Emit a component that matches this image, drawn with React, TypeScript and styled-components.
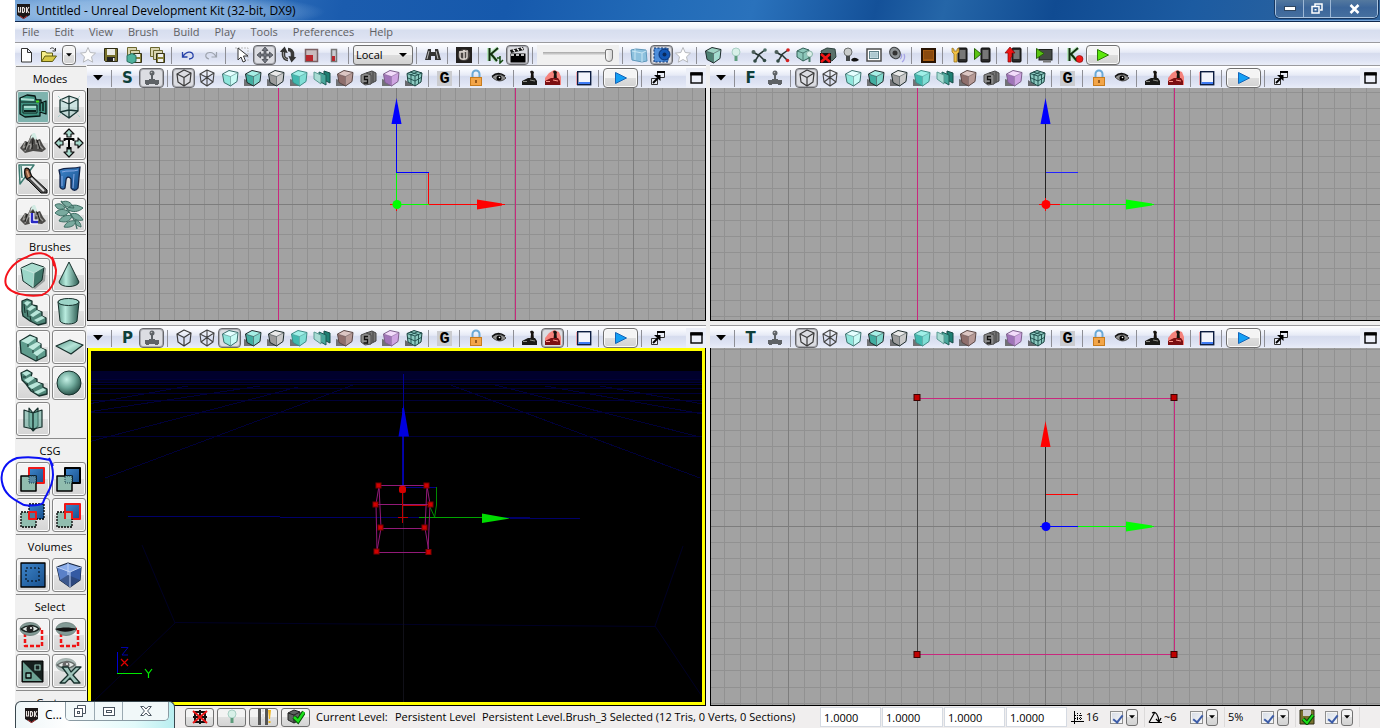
import React from "react";
import styled, { createGlobalStyle, css } from "styled-components";

const GlobalStyle = createGlobalStyle`
  * { box-sizing: border-box; }
  body { margin: 0; background: #fff; overflow: hidden; }
  button, input, select { font: inherit; color: inherit; margin: 0; padding: 0; }
  svg { display: block; }
`;

const barFill = "linear-gradient(#ffffff 0%, #f4f6fc 22%, #e6eaf6 42%, #d6dcee 48%, #dfe4f4 80%, #e9edf8 100%)";

const AppWindow = styled.div`
  position: relative;
  display: flex;
  flex-direction: column;
  height: 100vh;
  padding-left: 15px;
  font-family: "Open Sans", "Noto Sans", sans-serif;
  font-size: 12px;
  line-height: 16px;
  color: #000;
`;

const TitleBar = styled.header`
  display: flex;
  justify-content: space-between;
  flex: none;
  height: 22px;
  border-bottom: 1px solid #10284d;
  box-shadow: inset 0 -1px 0 #7ba8db;
  background:
    radial-gradient(ellipse 180px 20px at 130px 12px, rgba(190, 216, 242, 0.75) 0%, rgba(170, 204, 238, 0.6) 60%, transparent 100%),
    linear-gradient(105deg, #6b9cd2 0%, #3f7ec5 12%, #1b5cae 24%, #1659ac 36%, #236cb8 48%, #2a72bc 54%, #145199 63%, #2566a8 68%, #104b92 76%, #1c5ba1 86%, #31669f 100%);
`;
const TitleText = styled.div`
  display: flex;
  align-items: center;
  gap: 5px;
  padding: 1px 0 0 1px;
  white-space: nowrap;
`;
const TitleLabel = styled.h1`
  margin: 0;
  font-size: 12px;
  line-height: 20px;
  font-weight: 400;
`;
const WindowButtons = styled.div`
  display: flex;
  align-self: flex-start;
  height: 18px;
  margin-right: 2px;
  border: 1px solid #a9c3df;
  border-top: 0;
  border-radius: 0 0 5px 5px;
  box-shadow: 0 0 0 1px #17365f;
  overflow: hidden;
`;
const WindowButton = styled.button<{ $wide?: boolean }>`
  display: flex;
  align-items: center;
  justify-content: center;
  width: ${(p) => (p.$wide ? 47 : 27)}px;
  border: 0;
  border-left: 1px solid #9db8d6;
  background: linear-gradient(#54799f, #3c669a 45%, #456f9f);
  &:first-child { border-left: 0; }
`;

const MenuBar = styled.nav`
  display: flex;
  align-items: center;
  flex: none;
  height: 20px;
  background: linear-gradient(#ffffff 0%, #f1f4fb 30%, #d7deef 42%, #dde2f2 80%, #e6eaf6 100%);
`;
const MenuItem = styled.button`
  border: 0;
  padding: 0 8px 0 7px;
  background: none;
  font-size: 11px;
  color: #606063;
`;

const Bar = styled.div`
  display: flex;
  align-items: center;
  flex: none;
  height: 23px;
  padding-top: 2px;
  border-top: 1px solid #9a9a9e;
  background: ${barFill};
`;
const Separator = styled.i`
  flex: none;
  width: 8px;
  height: 17px;
  background: linear-gradient(#8e8f96, #8e8f96) 3px 0 / 1px 100% no-repeat;
`;
const ToolButton = styled.button<{ $pressed?: boolean; $w?: number; $raised?: boolean }>`
  display: flex;
  align-items: center;
  justify-content: center;
  flex: none;
  width: ${(p) => p.$w ?? 23}px;
  height: 20px;
  border: 1px solid transparent;
  border-radius: 4px;
  background: none;
  ${(p) => p.$pressed && css`
    border-color: #66676b;
    background: #dcdde2;
    box-shadow: inset 0 0 0 1px #a9aab0;
  `}
  ${(p) => p.$raised && css`
    border-color: #707070;
    background: linear-gradient(#f4f4f4 50%, #dedede 50%, #d2d2d2);
    box-shadow: inset 0 0 0 1px #fafafa;
  `}
`;
const Spacer = styled.span`
  flex: 1;
`;
const MaximizeSlot = styled.span`
  display: flex;
  justify-content: flex-end;
  width: 20px;
  background: #eceff8;
`;
const LetterGlyph = styled.b<{ $boxed?: boolean }>`
  font-family: ${(p) => (p.$boxed ? '"Liberation Mono", monospace' : '"DejaVu Sans", sans-serif')};
  font-size: ${(p) => (p.$boxed ? 17 : 15)}px;
  line-height: 15px;
  width: 15px;
  text-align: center;
  color: ${(p) => (p.$boxed ? "#000" : "#0e3f3a")};
  background: ${(p) => (p.$boxed ? "#cbccd0" : "none")};
`;

const SelectBox = styled.span`
  position: relative;
  flex: none;
  width: 60px;
  height: 20px;
  &::after {
    content: "";
    position: absolute;
    right: 6px;
    top: 8px;
    border: 4px solid transparent;
    border-top-color: #000;
    border-bottom: 0;
    pointer-events: none;
  }
`;
const Select = styled.select`
  appearance: none;
  width: 100%;
  height: 100%;
  padding-left: 2px;
  border: 1px solid #707070;
  border-radius: 3px;
  background: linear-gradient(#f3f3f3 50%, #dedede 50%, #d2d2d2);
  font-size: 11px;
`;
const SliderBox = styled.span`
  display: flex;
  align-items: center;
  width: 82px;
  height: 20px;
  padding: 0 6px;
  background: #f0f0f0;
`;
const Slider = styled.input`
  appearance: none;
  width: 100%;
  height: 14px;
  background: linear-gradient(#a5a5a5, #e4e4e4) 0 4px / 100% 3px no-repeat;
  &::-webkit-slider-thumb {
    appearance: none;
    width: 8px;
    height: 13px;
    border: 1px solid #777;
    border-radius: 2px 2px 4px 4px;
    background: linear-gradient(90deg, #fafafa, #d5d5d5);
  }
`;

const Main = styled.main`
  display: flex;
  flex: 1;
  min-height: 0;
`;
const SidePanel = styled.aside`
  flex: none;
  width: 72px;
  padding-top: 1px;
  overflow: hidden;
  background: #f0f0f0;
`;
const PanelSection = styled.section`
  padding: 0 1px;
`;
const SectionTitle = styled.h2`
  margin: 0;
  height: 24px;
  padding-right: 2px;
  border-top: 1px solid #8b8b8b;
  text-align: center;
  font-size: 11px;
  font-weight: 400;
  line-height: 23px;
`;
const ModeGrid = styled.div`
  display: grid;
  grid-template-columns: 34px 34px;
  gap: 2px;
  padding-bottom: 2px;
`;
const ModeButton = styled.button<{ $on?: boolean }>`
  display: flex;
  align-items: center;
  justify-content: center;
  height: 34px;
  border: 1px solid #858585;
  border-radius: 3px;
  background: ${(p) => (p.$on ? "#7fb3ae" : "linear-gradient(#f3f3f3 50%, #e2e2e2 50%, #d5d5d5)")};
  box-shadow: inset 0 0 0 1px ${(p) => (p.$on ? "#dfe8e8" : "#fbfbfb")};
`;

const ViewportGrid = styled.div`
  display: grid;
  flex: 1;
  min-width: 0;
  grid-template-columns: minmax(0, 619fr) minmax(0, 670fr);
  grid-template-rows: minmax(0, 256fr) minmax(0, 381fr);
  gap: 4px;
  background: #efefef;
`;
const ViewportBox = styled.section`
  display: flex;
  flex-direction: column;
  min-width: 0;
  min-height: 0;
  overflow: hidden;
`;
const Canvas = styled.div<{ $edge: boolean }>`
  flex: 1;
  min-height: 0;
  border: solid #000;
  border-width: 0 ${(p) => (p.$edge ? 0 : 1)}px 1px 1px;
  background: #a2a2a2;
  svg { width: 100%; height: 100%; }
`;

const StatusBar = styled.footer`
  display: flex;
  align-items: center;
  flex: none;
  height: 22px;
  padding-left: 170px;
  background: #f0eeee;
  font-size: 11px;
  white-space: nowrap;
`;
const StatusButton = styled.button`
  display: flex;
  align-items: center;
  justify-content: center;
  flex: none;
  width: 29px;
  height: 19px;
  margin-right: 3px;
  border: 1px solid #707070;
  border-radius: 3px;
  background: linear-gradient(#f3f3f3 50%, #e0e0e0 50%, #d4d4d4);
`;
const StatusText = styled.span<{ $w?: number }>`
  flex: none;
  width: ${(p) => (p.$w ? `${p.$w}px` : "auto")};
  padding-left: 3px;
`;
const ScaleInput = styled.input`
  flex: none;
  width: 61px;
  height: 20px;
  margin-right: 1px;
  padding-left: 3px;
  border: 1px solid #d5dae2;
  background: #fff;
`;
const SnapGroup = styled.div<{ $w: number }>`
  display: flex;
  align-items: center;
  flex: none;
  width: ${(p) => p.$w}px;
  height: 20px;
  padding: 0 6px 0 3px;
  border-right: 1px solid #dcdada;
`;
const SnapLabel = styled.label`
  display: flex;
  align-items: center;
  flex: 1;
  gap: 2px;
`;
const Check = styled.input`
  appearance: none;
  position: relative;
  width: 13px;
  height: 13px;
  margin-left: auto;
  border: 1px solid #8e8f8f;
  background: linear-gradient(135deg, #d5dbe4, #f6f8fb);
  box-shadow: inset 0 0 0 1px #f4f4f4;
  &:checked::after {
    content: "";
    position: absolute;
    left: 4px;
    top: 1px;
    width: 4px;
    height: 8px;
    border: solid #3c5ca8;
    border-width: 0 2px 2px 0;
    transform: rotate(38deg);
  }
`;
const DropButton = styled.button`
  display: flex;
  align-items: center;
  justify-content: center;
  width: 12px;
  height: 17px;
  margin-left: 3px;
  border: 1px solid #707070;
  border-radius: 3px;
  background: linear-gradient(#f3f3f3 50%, #dedede 50%, #d2d2d2);
`;

const MiniWindow = styled.div`
  position: absolute;
  left: 15px;
  bottom: 0;
  display: flex;
  justify-content: space-between;
  width: 160px;
  height: 27px;
  padding: 0 5px 0 6px;
  border: 1px solid #39474e;
  border-bottom: 0;
  border-radius: 6px 6px 0 0;
  background: linear-gradient(90deg, #eef6f8, #ffffff 35%, #e2fafa 75%, #b9eef0);
`;
const MiniTitle = styled.div`
  display: flex;
  align-items: center;
  gap: 6px;
  padding-left: 2px;
`;
const MiniButtons = styled.div`
  display: flex;
  height: 19px;
  border: 1px solid #8a9aa3;
  border-top: 0;
  border-radius: 0 0 5px 5px;
  overflow: hidden;
`;
const MiniButton = styled.button<{ $wide?: boolean }>`
  display: flex;
  align-items: center;
  justify-content: center;
  width: ${(p) => (p.$wide ? 46 : 28)}px;
  border: 0;
  border-left: 1px solid #9aa9b1;
  background: #f1f8f9;
  &:first-child { border-left: 0; }
`;

const Scribble = styled.svg<{ $top: number }>`
  position: absolute;
  left: 0;
  top: ${(p) => p.$top}px;
  pointer-events: none;
`;
const SharedDefs = styled.svg`
  position: absolute;
`;

/* ---------- small toolbar icons, drawn on a 18 x 18 field ---------- */

const Icon = ({ children, s = 18 }: { children: React.ReactNode; s?: number }) => (
  <svg width={s} height={s} viewBox={`0 0 ${s} ${s}`} fill="none" aria-hidden="true">{children}</svg>
);

const DownArrow = ({ s = 10 }: { s?: number }) => (
  <svg width={s} height="6" viewBox="0 0 10 6" aria-hidden="true"><path d="M0 0h10L5 5.5z" fill="#000" /></svg>
);

const UdkLogo = () => (
  <Icon s={15}>
    <path d="M1 0h13v11l-6.500 4L1 11z" fill="#1b1717" />
    <path d="M2.500 3v5h2V3M6.500 3.500v5h1l1-1v-3l-1-1zM10.500 3v6M13 3l-2 3 2 3" stroke="#e8e3e0" strokeWidth="1.100" />
    <path d="M4 12l3.500 2.500L11 12" stroke="#b33" />
  </Icon>
);

const Cube = ({ top, left, right, line = "#1e2b2b", shadow = true }: { top: string; left: string; right: string; line?: string; shadow?: boolean }) => (
  <Icon>
    {shadow && <path d="M0 10v7h10l-4-5z" fill="#555" opacity=".8" />}
    <path d="M1.500 5L8 1.500 17 3.500 9.500 7.500z" fill={top} />
    <path d="M1.500 5L9.500 7.500v9.500L3 13.500z" fill={left} />
    <path d="M9.500 7.500L17 3.500 16 12.500 9.500 17z" fill={right} />
    <path d="M1.500 5L8 1.500 17 3.500l-1 9L9.500 17 3 13.500z" stroke={line} strokeLinejoin="round" strokeWidth="1" />
    <path d="M1.500 5L9.500 7.500V17M9.500 7.500L17 3.500" stroke={line} strokeWidth=".8" opacity=".6" />
  </Icon>
);
const WireCube = () => (
  <Icon>
    <path d="M2 5l7-4 7 3-1 9-6 4-6-4zM2 5l7 3.500 7-4.500M9 8.500v8.500" stroke="#3a3a3a" strokeWidth="1.200" strokeLinejoin="round" />
  </Icon>
);
const WireCubeOpen = () => (
  <Icon>
    <path d="M2 5l7-4 7 3-1 9-6 4-6-4zM2 5l7 3.500 7-4.500M9 8.500v8.500M9 1v7.500L3 13M9 8.500l6 4.500" stroke="#444" strokeWidth="1.100" strokeLinejoin="round" />
  </Icon>
);
const Layers = () => (
  <Icon>
    <path d="M11 2l6 2v10l-6-3z" fill="#1f7f73" stroke="#174b46" />
    <path d="M6 3l7 3v10l-7-4z" fill="#49a79c" stroke="#1c5a54" />
    <path d="M1 3l7 3v9l-7-5z" fill="#a9dcd4" stroke="#5b9b93" />
  </Icon>
);
const SLayers = () => (
  <Icon>
    <path d="M7 4l6-2 4 2v8l-6 3z" fill="#777" stroke="#444" />
    <path d="M11 4v10M14 3v10" stroke="#444" />
    <path d="M2 6l5-2 5 2v9l-6 1-4-3z" fill="#8a8a8a" stroke="#4c4c4c" />
    <path d="M9 7.500H5.500v3h3V14H4.500" stroke="#111" strokeWidth="1.300" />
  </Icon>
);
const GridCube = () => (
  <Icon>
    <path d="M0 11v6h9z" fill="#333" opacity=".7" />
    <path d="M2 4.500L9 1.500l8 2.500-1 9-6 4-7-4z" fill="#8ccac1" stroke="#173f3c" />
    <path d="M2 4.500L10 7l7-3M10 7v10M5 3l8 2.500M13 2.500L5.500 6M3 9l7 3 7-4M6 6v9M13.500 5.500v9" stroke="#1c4b48" strokeWidth=".9" />
  </Icon>
);
const Joystick = ({ kind = "grey" }: { kind?: "grey" | "black" | "red" }) => (
  <Icon>
    {kind === "grey" ? (
      <>
        <circle cx="9" cy="4" r="2.500" fill="#5e6266" />
        <path d="M8 6h2v5H8zM6 10h6v1H6zM2 11h14v4H2zM3 15h3v1H3zM12 15h3v1h-3z" fill="#5e6266" />
        <circle cx="8.500" cy="3.500" r=".8" fill="#bbb" />
      </>
    ) : (
      <>
        {kind === "red" && <path d="M1 16V9l4-5 5-3 5 2 2 5v8z" fill="#f5827c" />}
        <path d="M9 2.500l2-1 2 1.500-.5 2 .5 5h-3.500l.5-5z" fill="#17130f" />
        <path d="M1 12l6-3h7l2 3v4H1z" fill={kind === "red" ? "#7c0f12" : "#1a1a18"} />
        <path d="M2 12.500h4M9 11l5 1" stroke={kind === "red" ? "#ff9b90" : "#8a8a84"} />
      </>
    )}
  </Icon>
);
const Lock = () => (
  <Icon>
    <path d="M5.500 9V5a3.500 3.500 0 017 0v4" stroke="#6aa9d6" strokeWidth="2" />
    <rect x="3.500" y="8.500" width="11" height="8" fill="#f3a548" stroke="#c67c1f" />
    <path d="M9 11v3" stroke="#7c430b" strokeWidth="1.500" />
  </Icon>
);
const Eye = () => (
  <Icon>
    <path d="M2 8c4-4 10-3 14 1-4 4-9 4-14-1z" fill="#8f8f8f" stroke="#444" />
    <path d="M2 7.500c4-4 9-3.500 13-.5" stroke="#111" strokeWidth="1.500" />
    <circle cx="9" cy="9" r="2.500" fill="#000" /><circle cx="9.500" cy="8.500" r=".8" fill="#fff" />
  </Icon>
);
const Frame = () => (
  <Icon>
    <path d="M2 3v13" stroke="#f66" />
    <rect x="2.700" y="2.700" width="13" height="13" fill="#f2f4fb" stroke="#0b1c40" strokeWidth="1.400" />
    <path d="M3.500 13h11.500v2H3.500z" fill="#3f7cf5" />
  </Icon>
);
const PlayGlyph = ({ green }: { green?: boolean }) => (
  <Icon s={14}><path d="M1.500 1.500L12.500 7l-11 5.500z" fill={green ? "#5be80a" : "#14a0f5"} stroke={green ? "#2b7a06" : "#1565b8"} /></Icon>
);
const PopOut = () => (
  <Icon>
    <path d="M8.500 2.500h7v6h-7zM2.500 9.500h6v6h-6z" fill="#e9edf7" stroke="#333" />
    <path d="M8 3h8" stroke="#000" strokeWidth="2" />
    <path d="M4 14l5-5" stroke="#000" strokeWidth="2" /><path d="M5 6h6.500v6z" fill="#000" />
  </Icon>
);
const Maximize = () => (
  <svg width="18" height="12" viewBox="0 0 18 12" fill="none" aria-hidden="true">
    <rect x="4" y="1" width="11" height="10" stroke="#000" strokeWidth="1.400" /><path d="M3.300 2h12.400" stroke="#000" strokeWidth="3" />
  </svg>
);
const NewFile = () => <Icon><path d="M4.500 2.500h6l4 4v9.500h-10zM10.500 2.500v4h4" fill="#fff" stroke="#333" strokeLinejoin="round" /></Icon>;
const OpenFile = () => (
  <Icon>
    <path d="M1.500 15.500v-10h4l1 1.500h6v3" fill="#f6ef8a" stroke="#5d5a14" />
    <path d="M1.500 15.500l3.500-5.500h11.500l-4 5.500z" fill="#d6c844" stroke="#5d5a14" />
    <path d="M10 3c2-2 4-1 5 1M15.500 2v3h-3" stroke="#333" />
  </Icon>
);
const Star = ({ soft }: { soft?: boolean }) => (
  <Icon><path d="M9 1.500l2.200 5 5.300.6-4 3.700 1.200 5.400L9 13.500l-4.700 2.700 1.200-5.400-4-3.700 5.300-.6z" fill={soft ? "#fff" : "#fdfdfd"} stroke="#b7b9bd" /></Icon>
);
const Disk = () => (
  <Icon>
    <path d="M2.500 2.500h13v13h-12l-1-1z" fill="#77702c" stroke="#2e2c16" />
    <path d="M5 3h8v6H5z" fill="#e9e9e4" /><path d="M5 11h8v4H5z" fill="#222" /><path d="M11 12h1.500v3H11z" fill="#eee" />
  </Icon>
);
const Disks = ({ cube }: { cube?: boolean }) => (
  <Icon>
    <path d="M2.500 1.500h9v9h-9z" fill="#d9d5b0" stroke="#6b672e" />
    <path d="M5.500 4.500h9v9h-9z" fill="#d9d5b0" stroke="#6b672e" />
    <path d="M8.500 7.500h8v9h-8z" fill="#8b843c" stroke="#35331a" />
    <path d="M10 8h5v3h-5zM10 13h5v3h-5z" fill="#eee" />
    {cube && <path d="M2 9.500l5-2 4 2v6l-4 2-5-2z" fill="#4fb29d" stroke="#2b6e60" />}
  </Icon>
);
const Undo = ({ flip }: { flip?: boolean }) => (
  <Icon>
    {flip
      ? <path d="M14.500 6v5h-5M14 10.500C11 5 5 6 4 8.500s1 4 3 4.500" stroke="#9da3ad" strokeWidth="1.200" />
      : <path d="M3.500 6v5h5M4 10.500C7 5 13 5 14 8.500s-2 4.500-4 4.500" stroke="#2742a8" strokeWidth="1.300" />}
  </Icon>
);
const Pointer = () => <Icon><path d="M2 2h13v13" stroke="#bbb" strokeDasharray="2 1" /><path d="M5 2v12l3-3 2 5 2.500-1-2-5H15z" fill="#fff" stroke="#333" strokeLinejoin="round" /></Icon>;
const Move = () => <Icon><path d="M9 1l3 3.500h-2V8h3.500V6L17 9l-3.500 3v-2H10v3.500h2L9 17l-3-3.500h2V10H4.500v2L1 9l3.500-3v2H8V4.500H6z" fill="#73777f" stroke="#3b3e45" strokeWidth=".7" /></Icon>;
const Rotate = () => (
  <Icon>
    <path d="M4.500 6v3a4.500 4.500 0 004.500 4.500M13.500 11V8A4.500 4.500 0 009 3.500" stroke="#3a3a3a" strokeWidth="3.500" />
    <path d="M4.500 1l4 6H.5zM13.500 16l-4-6h8z" fill="#333" transform="rotate(8 9 9)" />
    <path d="M4.500 6v3A4.500 4.500 0 009 13.500" stroke="#999" />
  </Icon>
);
const Scale = ({ slim }: { slim?: boolean }) => slim
  ? <Icon><path d="M6.500 3.500h5v12h-5z" fill="#c9ccd2" stroke="#777" strokeWidth="1.500" /><path d="M7 10h3v5H7z" fill="#b9272e" /></Icon>
  : <Icon><path d="M3.500 3.500h12v12h-12z" fill="#c9bcbe" stroke="#7a6164" strokeWidth="1.500" /><path d="M4 9h7v6H4z" fill="#b9272e" /></Icon>;
const Binoculars = () => <Icon><path d="M4 3h3v3h4V3h3l3 11h-6v-4H7v4H1z" fill="#333" /><path d="M3 13l2-8M12 5l2 8" stroke="#bbb" /></Icon>;
const ContentUdk = () => <Icon><rect x="1" y="1" width="16" height="16" fill="#24211f" /><circle cx="9" cy="9" r="6" fill="#4a4643" /><path d="M5 6v5c0 3 7 3 7 0V5M9 4v10M4 6l9-1" stroke="#d7d1cb" strokeWidth="1.500" /></Icon>;
const Kismet = ({ dot }: { dot?: boolean }) => (
  <Icon>
    <path d="M3 2v13M12 2L4 8l7 7" stroke="#9ce89c" strokeWidth="4" opacity=".6" />
    <path d="M3.500 2v13M12 2L5 8l6 7" stroke="#12300f" strokeWidth="2" />
    {dot ? <circle cx="13.500" cy="13" r="3.500" fill="#f01818" stroke="#7c0909" strokeWidth=".6" /> : <path d="M11 12h3M14 10v7l3-3" stroke="#164b12" strokeWidth="1.500" />}
  </Icon>
);
const Clapper = () => <Icon><rect x="1.500" y="7.500" width="15" height="9" fill="#000" /><path d="M1 4l13-3 1 3-13 3z" fill="#111" /><path d="M4 3.500l2 2M8 2.500l2 2M12 1.500l2 2M2 9h3M7 9h3M12 9h3" stroke="#fff" strokeWidth="1.300" /></Icon>;
const GlassBox = () => <Icon><path d="M1 4l5-1 10 1 1 11-5 1-10-2z" fill="#8dc1de" stroke="#5f98bb" /><path d="M2 5l10 2 4-2M12 7v9M5 3v11" stroke="#c8e6f4" /></Icon>;
const SelectGear = () => <Icon><rect x="1" y="2" width="14" height="14" fill="#4e8edb" stroke="#0d2e66" strokeDasharray="2 1.500" /><circle cx="11.500" cy="8.500" r="5.500" fill="#1257b5" stroke="#092f70" /><circle cx="11.500" cy="8.500" r="2" fill="#0a2a5c" /></Icon>;
const Bulb = ({ dark }: { dark?: boolean }) => (
  <Icon>
    <circle cx={dark ? 6 : 9} cy="6" r="4" fill={dark ? "#c9cccc" : "#d8f0e8"} stroke={dark ? "#6d7070" : "#a9cfc4"} />
    <path d={dark ? "M4 10h4v5H4z" : "M7.500 10h3v5h-3z"} fill={dark ? "#44484a" : "#5d9c7c"} />
    {dark && <path d="M9 14c2-3 5-3 8 0-3 2-6 2-8 0z" fill="#111" />}
  </Icon>
);
const Nodes = ({ red }: { red?: boolean }) => (
  <Icon>
    <path d="M3 6l5 3 7-5M9 9l-4 6M9 9l5 5" stroke="#263431" strokeWidth="1.500" />
    <circle cx="3.500" cy="6" r="2" fill="#4d5e5a" /><circle cx="5" cy="15" r="1.800" fill="#314a44" />
    <circle cx="15" cy="4" r="1.800" fill={red ? "#d31f1f" : "#4d6e66"} /><circle cx="14.500" cy="14.500" r="1.800" fill={red ? "#d31f1f" : "#314a44"} />
  </Icon>
);
const CubeBulb = () => <Icon><path d="M1 5l6-3 6 2v8l-6 3-6-4z" fill="#8cc7ba" stroke="#315e55" /><path d="M1 5l6 2 6-3M7 7v8" stroke="#315e55" opacity=".7" /><circle cx="13.500" cy="8" r="3" fill="#d9efe9" stroke="#8cb6ab" /><path d="M12.500 11h2v5h-2z" fill="#4a7b6c" /></Icon>;
const CubeCross = () => <Icon><path d="M2 5l6-3 8 1 1 8-4 4-9-2z" fill="#58706b" stroke="#2c403c" /><rect x="1" y="7" width="11" height="10" fill="#111" /><path d="M2 8l9 8M11 8l-9 8" stroke="#f31515" strokeWidth="2.500" /></Icon>;
const Portal = () => <Icon><rect x="2" y="3" width="14" height="12" fill="#fff" stroke="#4c4c4c" strokeWidth="1.500" /><rect x="4.500" y="5.500" width="9" height="7" fill="#cfe3e8" stroke="#5e7f88" /><path d="M7 6v6M9 6v6M11 6v6M5 8h8M5 10h8" stroke="#8fb0b8" strokeWidth=".6" /></Icon>;
const Speaker = () => <Icon><ellipse cx="7" cy="7" rx="5" ry="6" transform="rotate(-35 7 7)" fill="#8f9497" stroke="#3e4144" /><circle cx="7" cy="7" r="2.500" fill="#333" /><path d="M12 13c2-1 2-4 1-5M14 16c3-2 3-6 2-8" stroke="#a6a4e6" strokeWidth="1.300" /></Icon>;
const Crate = () => <Icon><rect x="3" y="3" width="13" height="13" fill="#a35a12" stroke="#2a1402" strokeWidth="2" /><rect x="5" y="5" width="9" height="8" fill="#8a4a0e" /></Icon>;
const Phone = ({ mark }: { mark: "wrench" | "play" | "up" }) => (
  <Icon>
    <rect x="8" y="2" width="9" height="14" rx="1" fill="#2a2a2a" stroke="#0c0c0c" /><rect x="9.500" y="4" width="6" height="9" fill="#777" />
    {mark === "wrench" && <path d="M2 2v4l2 2v8h3V8l2-2V2L7 3v2H4V3z" fill="#f0c046" stroke="#8c6712" strokeWidth=".7" />}
    {mark === "play" && <path d="M1.500 2.500L8 8l-6.500 5.500z" fill="#59c313" stroke="#276507" />}
    {mark === "up" && <path d="M6 1l5 6H8v4h-1v5H4V7H1z" fill="#f01313" stroke="#7c0707" strokeWidth=".7" />}
  </Icon>
);
const MonitorPlay = () => <Icon><rect x="4" y="3.500" width="13" height="10.500" fill="#454b46" stroke="#1e211f" /><path d="M8 15.500h8" stroke="#777" strokeWidth="2" /><path d="M1.500 2.500L9 7.500l-7.500 5z" fill="#59c313" stroke="#276507" /></Icon>;

/* ---------- large mode icons, drawn on a 30 x 30 field ---------- */

const mint = "url(#mint)";
const ink = "#17302c";
const Art = ({ children }: { children: React.ReactNode }) => (
  <svg width="30" height="30" viewBox="0 0 30 30" fill="none" strokeLinejoin="round" aria-hidden="true">{children}</svg>
);
const Mountain = () => (
  <>
    <path d="M2 20l5-7 3 1 3-7 3-1 3 6 3-1 3 6 3 4-4 3-9-1-8 2z" fill="#4c4b49" />
    <path d="M7 14l-2 6 3-2-1 5 3-6M13 9l-3 8 3-1-1 5 3-5M17 8l1 8 2-1 0 6M21 13l1 5 3 3" stroke="#9b9a97" strokeWidth="1.200" />
    <path d="M9 14l-2 8M15 11l-1 10M19 12l3 9" stroke="#1b1b1a" />
    <path d="M13 8l2-3h2l2 5-2 2-2-3-2 2z" fill="#d3ece4" />
  </>
);
const CamArt = () => (
  <Art>
    <path d="M2 6l7-3 8 1 1 4h5v3l5-2v13l-6-2v4l-15 1-5-3z" fill="#3f8f7f" stroke="#071513" strokeWidth="1.300" />
    <path d="M3 10h19M5 13h14v8H5z" stroke="#0b201c" fill="#5fae9d" /><path d="M3 7l13 1M6 15h12" stroke="#a9ddd0" strokeWidth="2" />
    <path d="M6 19h12" stroke="#0b201c" strokeWidth="2" />
    <path d="M22 11v8M25 11v8" stroke="#0b201c" strokeWidth="1.500" /><path d="M18 9.500h3" stroke="#49e01b" strokeWidth="2" />
  </Art>
);
const GeoArt = () => <Art><path d="M15 4l9 3v12l-9 7-9-6V8zM6 8l9 4 9-5M15 12v14M15 4v15M6 20l9-2 9 1" stroke="#173432" strokeWidth="1.300" fill="#9fd0cb" fillOpacity=".45" /><path d="M4 4l4 4M26 4l-4 4M4 25l4-4M26 25l-4-4" stroke="#8cc5c0" strokeDasharray="1 1" /></Art>;
const TerrainArt = () => <Art><Mountain /></Art>;
const TextureArt = () => (
  <Art>
    <path d="M15 1l5 5h-3v3h-4V6h-3zM15 29l5-5h-3v-3h-4v3h-3zM1 15l5-5v3h3v4H6v3zM29 15l-5-5v3h-3v4h3v3z" fill="#a6d9cc" stroke="#111" strokeWidth="1.200" />
    <path d="M10.500 13v-2h9v2M15 11v9M12.500 20h5" stroke="#000" strokeWidth="2" />
  </Art>
);
const PaintArt = () => (
  <Art>
    <path d="M1 1h15L2 20zM3 2l1 12" fill="#eef5f3" stroke="#3c7a70" strokeWidth="1.500" />
    <path d="M7 5c2-2 5 0 5 3l2 5-4 3c-3-2-4-7-3-11z" fill="#8d583b" stroke="#111" strokeWidth="1.300" />
    <path d="M9 7l2 6" stroke="#d9a27e" strokeWidth="1.500" />
    <path d="M9 15l5-3 15 14v3h-6z" fill="#4b4b4b" stroke="#111" /><path d="M13 14l13 13" stroke="#ddd" strokeWidth="2" />
  </Art>
);
const ClothArt = () => <Art><path d="M5 6c7-3 14-1 21-3l-2 21c-2 3-5 3-7 0V15c-2-3-5-2-5 1l-1 8c-2 2-4 1-5-1V11z" fill="url(#blue)" stroke="#122347" strokeWidth="1.300" /><path d="M8 8c5-2 11 0 16-2M8 12v10M20 10l-1 14" stroke="#88a9e4" /></Art>;
const LandscapeArt = () => <Art><Mountain /><path d="M14 13v9h6" stroke="#fff" strokeWidth="5" /><path d="M14 13v9h6" stroke="#2a2ac4" strokeWidth="2.500" /></Art>;
const FoliageArt = () => (
  <Art>
    <path d="M7 1C12 8 22 18 23 29" stroke="#3f6e64" strokeWidth="1.300" />
    <path d="M8 2c5-2 9 0 12 6-6 0-10-2-12-6zM13 9c4-5 10-5 16-1-4 4-11 5-16 1zM17 14c5-2 9 1 12 6-5 1-10 0-12-6zM11 8C8 3 4 3 1 5c2 5 6 5 10 3zM15 12C10 8 4 9 1 13c5 4 10 4 14-1zM18 16c-6-2-11 1-13 5 6 2 11 1 13-5zM22 21c-6-1-10 1-12 6 6 1 11-1 12-6zM21 20c3 0 6 3 6 7-4-1-6-3-6-7z" fill="#79aa9f" stroke="#3f6e64" />
  </Art>
);
const CubeArt = () => (
  <Art>
    <path d="M5 9l12-4 11 3-1 13-10 8L6 21z" fill="#1d2f2c" opacity=".35" />
    <path d="M3 8l11-5 12 4-10 6z" fill="#a9dccf" /><path d="M3 8l13 5-1 15-10-7z" fill="#9cd6c8" /><path d="M16 13l10-6-2 13-9 8z" fill="#3f776a" />
    <path d="M3 8l11-5 12 4-2 13-9 8-10-7z" stroke={ink} /><path d="M3 8l13 5-1 15M16 13l10-6" stroke="#d7f2ea" opacity=".7" />
  </Art>
);
const ConeArt = () => <Art><path d="M15 2l10 20c-1 6-19 6-20 0z" fill="url(#round)" stroke={ink} /></Art>;
const CurvedStairArt = () => (
  <Art>
    <path d="M4 5l5-2 5 2v4l5 1v4l5 2v4l4 2v5l-8 2-8-4-7-5-1-5z" fill="#4f8678" stroke={ink} strokeWidth="1.300" />
    <path d="M6 7l3-2 4 1-4 4zM9 13l5-4 4 2-6 4zM12 19l7-5 4 2-8 5zM16 24l8-4 3 2-8 4z" fill="#b9e6da" />
    <path d="M6 8l1 9M9 14l1 7M12 20l1 5" stroke={ink} />
  </Art>
);
const CylinderArt = () => <Art><path d="M4 6c0-4 21-4 21 0l-2 19c-2 4-15 4-17 0z" fill="url(#round)" stroke={ink} /><ellipse cx="14.500" cy="6" rx="10.500" ry="3.500" fill="#9cd4c7" stroke={ink} /></Art>;
const StairArt = () => (
  <Art>
    <path d="M2 9l10-6 7 3v4l4 2v4l5 2v6l-10 5L3 21z" fill="#5f9c8d" stroke={ink} strokeWidth="1.300" />
    <path d="M3 9l9-5 6 2-8 6zM10 15l9-5 4 2-8 6zM15 21l8-5 4 2-8 6z" fill="#bfe9de" />
    <path d="M10 12v3M15 18v3M19 24v5" stroke={ink} />
  </Art>
);
const SheetArt = () => <Art><path d="M2 14l14-6 13 5-12 9z" fill={mint} stroke={ink} strokeWidth="1.200" /></Art>;
const SpiralArt = () => (
  <Art>
    <path d="M3 5l6-3 5 3-1 4 6 2 0 3 6 2v3l4 2v5l-8 2-8-5-5-7-4-4z" fill="#4f8678" stroke={ink} strokeWidth="1.300" />
    <path d="M4 5l5-2 4 2-5 3zM6 12l7-4 4 2-7 5zM10 18l9-4 4 2-9 5zM16 24l9-4 3 2-8 4z" fill="#b9e6da" />
    <path d="M5 9l3 0M9 15l1 3M14 21l2 3" stroke={ink} />
  </Art>
);
const SphereArt = () => <Art><circle cx="15" cy="15" r="12" fill="url(#ball)" stroke={ink} /></Art>;
const VolSheetArt = () => (
  <Art>
    <path d="M11 4l4 5v18l-4-5zM20 4l-5 5v18l5-5z" fill="#6bae9f" fillOpacity=".8" stroke={ink} strokeWidth="1.200" />
    <path d="M6 6l9 3v16l-9-2zM24 6l-9 3v16l9-2z" fill="#6bae9f" fillOpacity=".6" stroke={ink} strokeWidth="1.200" />
  </Art>
);
const CsgArt = ({ kind }: { kind: "add" | "subtract" | "intersect" | "deintersect" }) => (
  <Art>
    {kind === "subtract" || kind === "add" ? (
      <>
        <rect x="11" y="4" width="15" height="15" fill="url(#blue)" stroke={kind === "add" ? "#f01818" : "#000"} strokeWidth="2" />
        <rect x="3" y="12" width="15" height="15" fill="#91bdaf" stroke="#000" strokeWidth="1.500" />
        <rect x="11" y="12" width="7" height="7" fill={kind === "add" ? "#5788a2" : "#7cb0ad"} stroke="#1c3f48" strokeDasharray="1 1" />
      </>
    ) : (
      <>
        <rect x="11" y="4" width="15" height="15" fill="url(#blue)" stroke={kind === "intersect" ? "#000" : "#f01818"} strokeWidth={kind === "intersect" ? 1.3 : 2} strokeDasharray={kind === "intersect" ? "2 1" : undefined} />
        <rect x="3" y="12" width="15" height="15" fill="#91bdaf" stroke="#000" strokeDasharray="2 1" strokeWidth="1.300" />
        <path d={kind === "intersect" ? "M11 12h7v7h-7z" : "M11 19v-7h7v7"} fill={kind === "intersect" ? "#4c7d9d" : "#a5c6bb"} stroke="#f01818" strokeWidth="2" />
      </>
    )}
  </Art>
);
const VolumeArt = () => <Art><rect x="3" y="3" width="24" height="24" fill="url(#blue)" stroke="#000" strokeWidth="1.300" /><rect x="8" y="8" width="13" height="13" stroke="#000" strokeDasharray="2 2" /></Art>;
const BlueCubeArt = () => (
  <Art>
    <path d="M3 7l11-4 13 4-1 13-10 7-10-7z" fill="#8badea" stroke="#17253f" strokeWidth="1.200" />
    <path d="M3 7l13 5v15l-10-7z" fill="#5a80c8" /><path d="M16 12l11-5-1 13-10 7z" fill="#345aa3" />
    <path d="M6 20l8-5 12 5-10 7z" fill="#27395f" opacity=".55" /><path d="M3 7l13 5 11-5M16 12v15M14 3v12" stroke="#bdd1f5" />
  </Art>
);
const EyeShape = ({ shut }: { shut?: boolean }) => (
  <>
    <ellipse cx="12" cy="9" rx="10" ry="6.500" fill="#839b96" stroke="#5a6f6a" strokeWidth=".7" />
    {shut ? <path d="M1 9c7-2 15-2 22 0-7 3-15 4-22 0z" fill="#111" /> : (
      <>
        <path d="M3 9c5-4 13-5 18 0-5 4-13 4-18 0z" fill="#dde6e3" stroke="#182320" strokeWidth="1.500" />
        <circle cx="12" cy="9" r="3.500" fill="#222" /><circle cx="13" cy="8" r="1" fill="#fff" />
      </>
    )}
  </>
);
const SelectArt = ({ shut }: { shut?: boolean }) => <Art><path d="M7 9h17v17H7z" stroke="#f01212" strokeWidth="2.500" strokeDasharray="4 2" /><EyeShape shut={shut} /></Art>;
const InvertArt = () => <Art><rect x="4" y="5" width="21" height="21" fill="#16201e" stroke="#000" /><path d="M5 6l19 19H5z" fill="#6da193" /><path d="M8 17h5v5H8z" fill="#8fc0b3" stroke="#000" strokeWidth="1.300" /><path d="M17 9h5v5h-5z" stroke="#8fc0b3" strokeWidth="1.200" /></Art>;
const HideArt = () => <Art><g opacity=".65"><EyeShape /></g><path d="M8 11h6l3 5 5-5h5l-8 8 7 8h-6l-4-5-5 5H6l8-8z" fill="#9fc4bb" stroke="#17302c" strokeWidth="1.300" /></Art>;

/* ---------- viewport drawings ---------- */

type Box = { x: number; y: number; w: number; h: number };

const steps = (from: number, to: number, origin: number, step: number) => {
  const out: { at: number; major: boolean }[] = [];
  for (let n = Math.ceil((from - origin) / step); origin + n * step < to; n++) {
    out.push({ at: Math.round(origin + n * step), major: n % 16 === 0 });
  }
  return out;
};

const OrthoGrid = ({ box, cx, cy, step }: { box: Box; cx: number; cy: number; step: number }) => {
  const xs = steps(box.x, box.x + box.w, cx, step);
  const ys = steps(box.y, box.y + box.h, cy, step);
  const tone = (major: boolean) => (major ? "#7d7d7d" : "#919191");
  const lines = [
    ...xs.map((l) => ({ ...l, d: `M${l.at + 0.5} ${box.y}v${box.h}` })),
    ...ys.map((l) => ({ ...l, d: `M${box.x} ${l.at + 0.5}h${box.w}` })),
  ].sort((a, b) => Number(a.major) - Number(b.major));
  return <g shapeRendering="crispEdges">{lines.map((l) => <path key={l.d} d={l.d} stroke={tone(l.major)} />)}</g>;
};

const Scene = ({ box, children }: { box: Box; children: React.ReactNode }) => (
  <svg viewBox={`${box.x} ${box.y} ${box.w} ${box.h}`} preserveAspectRatio="xMidYMid slice" fill="none" aria-hidden="true">{children}</svg>
);

const topLeft: Box = { x: 88, y: 88, w: 617, h: 232 };
const topRight: Box = { x: 711, y: 88, w: 669, h: 232 };
const lowerLeft: Box = { x: 88, y: 348, w: 617, h: 357 };
const lowerRight: Box = { x: 711, y: 348, w: 669, h: 357 };

const SideScene = () => (
  <Scene box={topLeft}>
    <OrthoGrid box={topLeft} cx={396} cy={204} step={14.8} />
    <path d="M278.500 88v232M515.500 88v232" stroke="#c8287d" />
    <path d="M390 204.500h10M396.500 200v11" stroke="#f00" />
    <path d="M396.500 172V120M396 172.500h33" stroke="#00f" />
    <path d="M396.500 98l5 26h-10z" fill="#00f" />
    <path d="M428.500 173v31M429 204.500h76" stroke="#f00" />
    <path d="M477 199.500v10l25-4v-2z" fill="#f00" />
    <path d="M396.500 204V173M397 204.500h32" stroke="#0f0" />
    <circle cx="397" cy="204.500" r="4.500" fill="#0f0" />
  </Scene>
);
const FrontScene = () => (
  <Scene box={topRight}>
    <OrthoGrid box={topRight} cx={1045} cy={204} step={16.05} />
    <path d="M917.500 88v232M1174.500 88v232" stroke="#c8287d" />
    <path d="M1046 172.500h32" stroke="#22f" />
    <path d="M1045.500 204v-86" stroke="#222" />
    <path d="M1045.500 98l5 26h-10z" fill="#00f" />
    <path d="M1060 204.500h94" stroke="#0f0" />
    <path d="M1126 199.500v10l26-4v-2z" fill="#0f0" />
    <path d="M1039 204.500h21M1045.500 198v13" stroke="#f00" />
    <circle cx="1046" cy="204.500" r="4.500" fill="#f00" />
  </Scene>
);
const TopScene = () => (
  <Scene box={lowerRight}>
    <OrthoGrid box={lowerRight} cx={1045} cy={526} step={16.05} />
    <path d="M917.500 398v257" stroke="#444" />
    <path d="M917 398.500h257M917 654.500h257M1174.500 398v257" stroke="#c8287d" />
    <path d="M1045.500 526V440" stroke="#222" />
    <path d="M1045.500 421l5 26h-10z" fill="#f00" />
    <path d="M1046 494.500h32" stroke="#f00" />
    <path d="M1040 526.500h38" stroke="#00f" />
    <path d="M1078 526.500h76" stroke="#0f0" />
    <path d="M1126 521.500v10l26-4v-2z" fill="#0f0" />
    <circle cx="1046" cy="526.500" r="4.500" fill="#00f" />
    {[[917, 398], [1174, 398], [917, 655], [1174, 655]].map(([x, y]) => (
      <rect key={`${x}-${y}`} x={x - 3} y={y - 3.500} width="6" height="6" fill="#c00000" stroke="#3d0000" />
    ))}
  </Scene>
);
const corners = [[378.500, 485.500], [426.500, 485.500], [375.500, 504.500], [430.500, 504.500], [380.500, 527.500], [424.500, 527.500], [376.500, 551.500], [428.500, 552]];
const PerspectiveScene = () => (
  <Scene box={lowerLeft}>
    <rect x="88" y="348" width="617" height="357" fill="#000" />
    <rect x="88" y="371" width="617" height="8" fill="#00002c" />
    <rect x="88" y="379" width="617" height="3" fill="#00001c" />
    <g stroke="#000038" shapeRendering="crispEdges">
      <path d="M88 379.500h617M88 382.500h617M88 384.500h617M88 388.500h617M88 393.500h617M88 400.500h617M88 412.500h617M88 436.500h617" />
      <path d="M88 404l100-18M88 412l172-26M88 442l210-55M105 478L353 385M448 384l252 94M495 385l205 52M545 386l158 28M600 386l103 18" />
    </g>
    <g stroke="#000024">
      <path d="M142 545l33 78M175 623l-82 79M175 622.500l480 4M655 626l28-80M655 626l48 72" />
    </g>
    <path d="M128 516.500h152M280 517.500h250M510 518.500h70" stroke="#00006a" />
    <path d="M403.500 384v318" stroke="#101018" />
    <path d="M403.500 374v34" stroke="#000090" />
    <path d="M403 408v78" stroke="#0000d8" strokeWidth="1.500" />
    <path d="M403.500 405l5.500 31.500h-10.500z" fill="#00d" />
    <path d="M403.500 487.500h33" stroke="#000088" />
    <path d="M436.500 487v18l-2 13M435 518l-5-11" stroke="#008a00" />
    <path d="M419 517.500h63" stroke="#00a500" />
    <path d="M482 513.500l28 5-28 4.500z" fill="#00dc00" />
    <path d="M379 485.500h48M376 504.500h54M380 528.500h44M377 552.500h51M379 486l-3 18 1 47M379 486l2 42-4 23M427 486l3 18-2 47M427 486l-2 42 4 24" stroke="#921a78" />
    <path d="M402.500 486v37M403 505.500h24M398 517.500h10" stroke="#c00000" />
    <rect x="399" y="486" width="7" height="7" rx="2" fill="#d40000" />
    {corners.map(([x, y]) => <rect key={`${x}-${y}`} x={x - 2.500} y={y - 2.500} width="5" height="5" fill="#d00000" stroke="#7c0000" />)}
    <path d="M117.500 652v21" stroke="#0000d0" />
    <path d="M117 673.500h25" stroke="#00e800" />
    <path d="M121 647.500h7l-6 7.500h6" stroke="#0000a8" />
    <path d="M121 659l7 7M128 659l-7 7" stroke="#e00000" strokeWidth="1.200" />
    <path d="M145 669l3.500 4.500 3.500-4.500M148.500 673.500v4.500" stroke="#00f000" strokeWidth="1.200" />
    <rect x="89.500" y="349.500" width="614" height="354" stroke="#ff0" strokeWidth="3" />
  </Scene>
);

/* ---------- toolbars ---------- */

type Tool = "|" | { label: string; icon: React.ReactNode; pressed?: boolean; raised?: boolean; w?: number };

const Tools = ({ items }: { items: Tool[] }) => (
  <>
    {items.map((t, i) => t === "|"
      ? <Separator key={i} />
      : <ToolButton key={i} type="button" aria-label={t.label} $pressed={t.pressed} $raised={t.raised} $w={t.w}>{t.icon}</ToolButton>)}
  </>
);

const fileTools: Tool[] = [
  { label: "New", icon: <NewFile />, w: 21 }, { label: "Open", icon: <OpenFile />, w: 26 },
  { label: "Recent files", icon: <DownArrow s={6} />, raised: true, w: 14 }, { label: "Favorite", icon: <Star />, w: 23 },
  { label: "Save", icon: <Disk /> }, { label: "Save level", icon: <Disks cube /> }, { label: "Save all", icon: <Disks /> }, "|",
  { label: "Undo", icon: <Undo /> }, { label: "Redo", icon: <Undo flip /> }, "|",
  { label: "Select", icon: <Pointer /> }, { label: "Translate", icon: <Move />, pressed: true }, { label: "Rotate", icon: <Rotate /> },
  { label: "Scale", icon: <Scale /> }, { label: "Scale non-uniform", icon: <Scale slim /> }, "|",
];
const browserTools: Tool[] = [
  "|", { label: "Find actors", icon: <Binoculars /> }, "|", { label: "Content browser", icon: <ContentUdk /> }, "|",
  { label: "Kismet", icon: <Kismet /> }, { label: "Matinee", icon: <Clapper />, pressed: true }, "|",
];
const buildTools: Tool[] = [
  "|", { label: "Brush polys", icon: <GlassBox /> }, { label: "Selection", icon: <SelectGear />, pressed: true }, { label: "Favorites", icon: <Star soft />, w: 20 }, "|",
  { label: "Build geometry", icon: <Cube top="#9ed3c4" left="#4d8274" right="#a4ddd0" shadow={false} /> }, { label: "Build lighting", icon: <Bulb /> },
  { label: "Build paths", icon: <Nodes /> }, { label: "Build cover", icon: <Nodes red /> }, { label: "Build all", icon: <CubeBulb /> },
  { label: "Hide build", icon: <CubeCross /> }, { label: "Lighting view", icon: <Bulb dark /> }, { label: "Portals", icon: <Portal /> }, { label: "Audio", icon: <Speaker /> }, "|",
  { label: "Fullscreen", icon: <Crate /> }, "|",
  { label: "Mobile setup", icon: <Phone mark="wrench" /> }, { label: "Mobile play", icon: <Phone mark="play" /> }, "|",
  { label: "Mobile install", icon: <Phone mark="up" /> }, "|", { label: "Play on PC", icon: <MonitorPlay /> }, "|",
  { label: "Kismet debug", icon: <Kismet dot /> }, { label: "Play in editor", icon: <PlayGlyph green />, raised: true, w: 34 },
];

const renderModes: { label: string; icon: React.ReactNode }[] = [
  { label: "Brush wireframe", icon: <WireCube /> }, { label: "Wireframe", icon: <WireCubeOpen /> },
  { label: "Unlit", icon: <Cube top="#e4ffff" left="#8fe6dc" right="#c9fbf5" line="#3a6f6c" shadow={false} /> },
  { label: "Lit", icon: <Cube top="#a6efe6" left="#42aea1" right="#7ed6cb" /> },
  { label: "Detail lighting", icon: <Cube top="#e9e9e9" left="#9c9c9c" right="#c9c9c9" /> },
  { label: "Lighting only", icon: <Cube top="#9ff0e8" left="#41b9b0" right="#7fded5" line="#3d8b85" /> },
  { label: "Light complexity", icon: <Layers /> },
  { label: "Texture density", icon: <Cube top="#dcc6c3" left="#8f6f6c" right="#b79a96" line="#5a4644" /> },
  { label: "Shader complexity", icon: <SLayers /> },
  { label: "Lightmap density", icon: <Cube top="#f3dbfb" left="#a074b9" right="#cfa4e2" line="#7c5f8c" /> },
  { label: "Lit lightmap density", icon: <GridCube /> },
];

const Viewport = ({ name, letter, render = 0, joystick, red, edge = false, children }: {
  name: string; letter: string; render?: number; joystick?: boolean; red?: boolean; edge?: boolean; children: React.ReactNode;
}) => (
  <ViewportBox aria-label={name}>
    <Bar role="toolbar">
      <Tools items={[
        { label: "Viewport options", icon: <DownArrow />, w: 21 }, "|",
        { label: name, icon: <LetterGlyph>{letter}</LetterGlyph> },
        { label: "Realtime", icon: <Joystick />, pressed: joystick, w: 25 }, "|",
        ...renderModes.map((m, i) => ({ ...m, pressed: i === render })), "|",
        { label: "Game view", icon: <LetterGlyph $boxed>G</LetterGlyph> }, "|",
        { label: "Lock viewport", icon: <Lock /> }, { label: "Show flags", icon: <Eye /> }, "|",
        { label: "Stream levels", icon: <Joystick kind="black" /> }, { label: "Stream volumes", icon: <Joystick kind="red" />, pressed: red }, "|",
        { label: "Safe frames", icon: <Frame /> }, "|",
        { label: "Play in viewport", icon: <PlayGlyph />, raised: true, w: 35 }, "|",
        { label: "Tear off", icon: <PopOut /> },
      ]} />
      <Spacer />
      <MaximizeSlot><ToolButton type="button" aria-label="Maximize viewport" $w={20}><Maximize /></ToolButton></MaximizeSlot>
    </Bar>
    <Canvas $edge={edge}>{children}</Canvas>
  </ViewportBox>
);

const panels: { title: string; items: { label: string; art: React.ReactNode; on?: boolean }[] }[] = [
  { title: "Modes", items: [
    { label: "Camera mode", art: <CamArt />, on: true }, { label: "Geometry mode", art: <GeoArt /> },
    { label: "Terrain editing", art: <TerrainArt /> }, { label: "Texture alignment", art: <TextureArt /> },
    { label: "Mesh paint", art: <PaintArt /> }, { label: "Static mesh mode", art: <ClothArt /> },
    { label: "Landscape", art: <LandscapeArt /> }, { label: "Foliage", art: <FoliageArt /> },
  ] },
  { title: "Brushes", items: [
    { label: "Cube", art: <CubeArt /> }, { label: "Cone", art: <ConeArt /> },
    { label: "Curved staircase", art: <CurvedStairArt /> }, { label: "Cylinder", art: <CylinderArt /> },
    { label: "Linear staircase", art: <StairArt /> }, { label: "Sheet", art: <SheetArt /> },
    { label: "Spiral staircase", art: <SpiralArt /> }, { label: "Sphere", art: <SphereArt /> },
    { label: "Volumetric", art: <VolSheetArt /> },
  ] },
  { title: "CSG", items: [
    { label: "Add", art: <CsgArt kind="add" /> }, { label: "Subtract", art: <CsgArt kind="subtract" /> },
    { label: "Intersect", art: <CsgArt kind="intersect" /> }, { label: "Deintersect", art: <CsgArt kind="deintersect" /> },
  ] },
  { title: "Volumes", items: [{ label: "Add special brush", art: <VolumeArt /> }, { label: "Add volume", art: <BlueCubeArt /> }] },
  { title: "Select", items: [
    { label: "Show selected", art: <SelectArt /> }, { label: "Hide selected", art: <SelectArt shut /> },
    { label: "Invert selection", art: <InvertArt /> }, { label: "Show all", art: <HideArt /> },
  ] },
  { title: "Go to", items: [] },
];

const menus = ["File", "Edit", "View", "Brush", "Build", "Play", "Tools", "Preferences", "Help"];

const Snap = ({ label, icon, text, w }: { label: string; icon?: React.ReactNode; text?: string; w: number }) => (
  <SnapGroup $w={w}>
    <SnapLabel>{icon}{text}<Check type="checkbox" defaultChecked aria-label={label} /></SnapLabel>
    <DropButton type="button" aria-label={`${label} options`}><DownArrow s={6} /></DropButton>
  </SnapGroup>
);

export default function App() {
  return (
    <AppWindow>
      <GlobalStyle />
      <SharedDefs width="0" height="0" aria-hidden="true">
        <defs>
          <linearGradient id="mint" x1="0" y1="0" x2="1" y2="1"><stop offset="0" stopColor="#4f8e80" /><stop offset=".5" stopColor="#b5e4d8" /><stop offset="1" stopColor="#5a9a8b" /></linearGradient>
          <linearGradient id="round"><stop offset="0" stopColor="#5b9486" /><stop offset=".35" stopColor="#b9ecdf" /><stop offset="1" stopColor="#2b5a50" /></linearGradient>
          <radialGradient id="ball" cx=".4" cy=".35" r=".7"><stop offset="0" stopColor="#c5f1e6" /><stop offset=".5" stopColor="#6fa99b" /><stop offset="1" stopColor="#1f463e" /></radialGradient>
          <linearGradient id="blue" x1="0" y1="0" x2="1" y2="1"><stop offset="0" stopColor="#3f86cb" /><stop offset="1" stopColor="#174f8c" /></linearGradient>
        </defs>
      </SharedDefs>

      <TitleBar>
        <TitleText><UdkLogo /><TitleLabel>Untitled - Unreal Development Kit (32-bit, DX9)</TitleLabel></TitleText>
        <WindowButtons>
          <WindowButton type="button" aria-label="Minimize"><svg width="12" height="5"><rect x=".5" y=".5" width="11" height="4" fill="#fff" stroke="#2f4660" /></svg></WindowButton>
          <WindowButton type="button" aria-label="Restore"><svg width="12" height="11" fill="none" stroke="#fff" strokeWidth="1.500"><path d="M4 3V1h7v6H9" /><rect x="1" y="3.500" width="7" height="6.500" /><path d="M3.500 6.800h2" /></svg></WindowButton>
          <WindowButton type="button" aria-label="Close" $wide><svg width="11" height="10" stroke="#fff" strokeWidth="2.500"><path d="M1.500 1l8 8M9.500 1l-8 8" /></svg></WindowButton>
        </WindowButtons>
      </TitleBar>

      <MenuBar>{menus.map((m) => <MenuItem key={m} type="button">{m}</MenuItem>)}</MenuBar>

      <Bar role="toolbar">
        <Tools items={fileTools} />
        <SelectBox><Select aria-label="Coordinate system" defaultValue="Local"><option>Local</option></Select></SelectBox>
        <Tools items={browserTools} />
        <SliderBox><Slider type="range" aria-label="Far plane distance" defaultValue="100" /></SliderBox>
        <Tools items={buildTools} />
      </Bar>

      <Main>
        <SidePanel>
          {panels.map((p) => (
            <PanelSection key={p.title}>
              <SectionTitle>{p.title}</SectionTitle>
              <ModeGrid>{p.items.map((m) => <ModeButton key={m.label} type="button" aria-label={m.label} $on={m.on}>{m.art}</ModeButton>)}</ModeGrid>
            </PanelSection>
          ))}
        </SidePanel>
        <ViewportGrid>
          <Viewport name="Side" letter="S" joystick><SideScene /></Viewport>
          <Viewport name="Front" letter="F" edge><FrontScene /></Viewport>
          <Viewport name="Perspective" letter="P" render={2} joystick red><PerspectiveScene /></Viewport>
          <Viewport name="Top" letter="T" edge><TopScene /></Viewport>
        </ViewportGrid>
      </Main>

      <StatusBar>
        <StatusButton type="button" aria-label="Lighting build"><Icon s={16}><path d="M3 3h10v10H3zM1 8h14M8 1v14" stroke="#111" strokeWidth="2" /><path d="M1 2l14 12M15 2L1 14" stroke="#e81818" strokeWidth="2" /></Icon></StatusButton>
        <StatusButton type="button" aria-label="Lighting"><Bulb /></StatusButton>
        <StatusButton type="button" aria-label="Paths"><Icon s={16}><path d="M2 0h3v16H2zM9 0h3v16H9z" fill="#555" /><path d="M7 0v16" stroke="#ccc" strokeDasharray="3 2" /><path d="M12 1h3l-1 9h-1zM12.500 12h2v2h-2z" fill="#efb41d" /></Icon></StatusButton>
        <StatusButton type="button" aria-label="Geometry"><Icon s={18}><path d="M1 5l6-3 6 2v8l-6 3-6-3z" fill="#5e6361" stroke="#222" /><path d="M1 5l6 2 6-3M7 7v8" stroke="#222" /><path d="M7 9l4 4 6-9" stroke="#064b05" strokeWidth="4.500" /><path d="M7 9l4 4 6-9" stroke="#1be01b" strokeWidth="2.500" /></Icon></StatusButton>
        <StatusText $w={79}>Current Level:</StatusText>
        <StatusText $w={87}>Persistent Level</StatusText>
        <StatusText $w={341}>Persistent Level.Brush_3 Selected (12 Tris, 0 Verts, 0 Sections)</StatusText>
        {["X", "Y", "Z", "Uniform"].map((axis) => <ScaleInput key={axis} type="text" aria-label={`Draw scale ${axis}`} defaultValue="1.0000" />)}
        <Snap label="Grid snap" text="16" w={77} icon={<Icon s={13}><path d="M3.500 0v13M0 10.500h13" stroke="#000" /><path d="M6.500 2v8M9.500 2v8M4 4.500h8M4 7.500h8" stroke="#000" strokeDasharray="1 1" /></Icon>} />
        <Snap label="Rotation snap" text="~6" w={80} icon={<Icon s={14}><path d="M1 12.500h13M1 12.500L7 2M4 3c4-2 6 2 7 8M8 9l3 3 2-4" stroke="#000" strokeWidth="1.200" /></Icon>} />
        <Snap label="Scale snap" text="5%" w={71} />
        <Snap label="Autosave" w={64} icon={<Icon s={16}><path d="M1 1h14v14H1z" fill="#77702c" stroke="#2e2c16" /><path d="M4 1h8v6H4z" fill="#ccc" /><path d="M4 10l4 4 6-8" stroke="#064b05" strokeWidth="4" /><path d="M4 10l4 4 6-8" stroke="#1be01b" strokeWidth="2" /></Icon>} />
      </StatusBar>

      <MiniWindow>
        <MiniTitle><UdkLogo />C...</MiniTitle>
        <MiniButtons>
          <MiniButton type="button" aria-label="Restore"><svg width="12" height="12" fill="#fff" stroke="#4a5560"><path d="M3.500 3V.5h8v8H9" /><rect x=".5" y="3.500" width="8" height="8" /><rect x="3.500" y="6.500" width="2" height="2" /></svg></MiniButton>
          <MiniButton type="button" aria-label="Maximize"><svg width="12" height="9" fill="#fff" stroke="#4a5560"><rect x=".5" y=".5" width="11" height="8" /><rect x="3.500" y="3.500" width="5" height="2" /></svg></MiniButton>
          <MiniButton type="button" aria-label="Close" $wide><svg width="12" height="10" fill="#fff" stroke="#4a5560"><path d="M.7.5h3L6 3 8.300.5h3L7.600 5l3.700 4.500h-3L6 7 3.700 9.500h-3L4.400 5z" /></svg></MiniButton>
        </MiniButtons>
      </MiniWindow>

      <Scribble $top={250} width="60" height="52" fill="none" aria-hidden="true">
        <path d="M53 10C47 2 36 1 27 7 12 12 3 26 6 35c4 9 22 12 36 10 8-3 14-13 14-25-1-6-2-9-4-13l2 9" stroke="#f5131b" strokeWidth="2" />
      </Scribble>
      <Scribble $top={450} width="60" height="60" fill="none" aria-hidden="true">
        <path d="M50 10C42 8 30 6 17 8 5 12 0 22 2 32c2 13 13 18 22 23 8 1 16 0 19-2 2-8 10-15 10-28 0-8-2-13-4-17l4 8" stroke="#0a10f5" strokeWidth="2" />
      </Scribble>
    </AppWindow>
  );
}
